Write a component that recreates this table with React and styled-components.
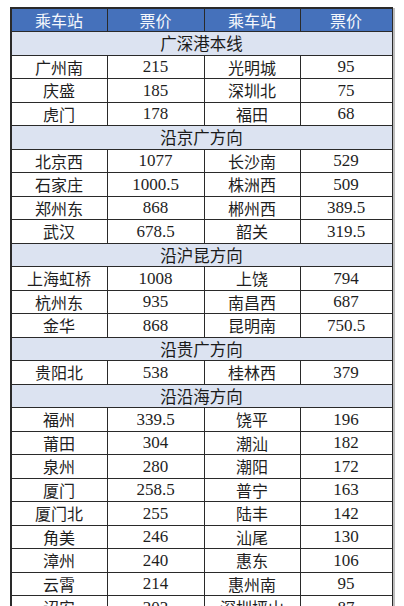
import React from 'react';
import styled, { createGlobalStyle } from 'styled-components';

const GlobalStyle = createGlobalStyle`
  html, body {
    margin: 0;
    padding: 0;
    background: #ffffff;
    overflow: hidden;
  }
`;

const Page = styled.div`
  padding: 7px 0 0 10px;
  height: 606px;
  box-sizing: border-box;
`;

const Grid = styled.div`
  width: 383px;
  display: grid;
  grid-template-columns: 95px 96px 95px 1fr;
  grid-auto-rows: 22.5px;
  gap: 1px;
  padding: 1.5px;
  background: #2a2a2a;
  box-sizing: border-box;
  box-shadow: 3px 0 0 -1px #bdbdbd;
`;

const Cell = styled.div`
  display: flex;
  align-items: center;
  justify-content: center;
  background: #ffffff;
  color: #1e1e1e;
  font-family: ${props => props.$num
    ? '"Liberation Serif", "Times New Roman", serif'
    : '"Noto Sans CJK SC", "Noto Sans", sans-serif'};
  font-size: ${props => props.$num ? '17px' : '16px'};
  line-height: 1;
  white-space: nowrap;
`;

const HeadCell = styled(Cell)`
  background: #4571bb;
  color: #f4f7fc;
  font-family: "Noto Sans CJK SC", "Noto Sans", sans-serif;
  font-size: 16px;
`;

const SectionCell = styled(Cell)`
  grid-column: 1 / -1;
  background: #dce3f1;
  color: #1a1a1a;
  font-family: "Noto Sans CJK SC", "Noto Sans", sans-serif;
  font-size: 16.5px;
`;

const sections = [
  {
    title: '广深港本线',
    rows: [
      ['广州南', '215', '光明城', '95'],
      ['庆盛', '185', '深圳北', '75'],
      ['虎门', '178', '福田', '68'],
    ],
  },
  {
    title: '沿京广方向',
    rows: [
      ['北京西', '1077', '长沙南', '529'],
      ['石家庄', '1000.5', '株洲西', '509'],
      ['郑州东', '868', '郴州西', '389.5'],
      ['武汉', '678.5', '韶关', '319.5'],
    ],
  },
  {
    title: '沿沪昆方向',
    rows: [
      ['上海虹桥', '1008', '上饶', '794'],
      ['杭州东', '935', '南昌西', '687'],
      ['金华', '868', '昆明南', '750.5'],
    ],
  },
  {
    title: '沿贵广方向',
    rows: [['贵阳北', '538', '桂林西', '379']],
  },
  {
    title: '沿沿海方向',
    rows: [
      ['福州', '339.5', '饶平', '196'],
      ['莆田', '304', '潮汕', '182'],
      ['泉州', '280', '潮阳', '172'],
      ['厦门', '258.5', '普宁', '163'],
      ['厦门北', '255', '陆丰', '142'],
      ['角美', '246', '汕尾', '130'],
      ['漳州', '240', '惠东', '106'],
      ['云霄', '214', '惠州南', '95'],
      ['诏安', '203', '深圳坪山', '87'],
    ],
  },
];

const headers = ['乘车站', '票价', '乘车站', '票价'];

const App = () => (
  <>
    <GlobalStyle />
    <Page>
      <Grid>
        {headers.map((h, i) => (
          <HeadCell key={`h${i}`}>{h}</HeadCell>
        ))}
        {sections.map(section => (
          <React.Fragment key={section.title}>
            <SectionCell>{section.title}</SectionCell>
            {section.rows.map((row, r) =>
              row.map((value, c) => (
                <Cell key={`${section.title}-${r}-${c}`} $num={c % 2 === 1}>
                  {value}
                </Cell>
              ))
            )}
          </React.Fragment>
        ))}
      </Grid>
    </Page>
  </>
);

export default App;
